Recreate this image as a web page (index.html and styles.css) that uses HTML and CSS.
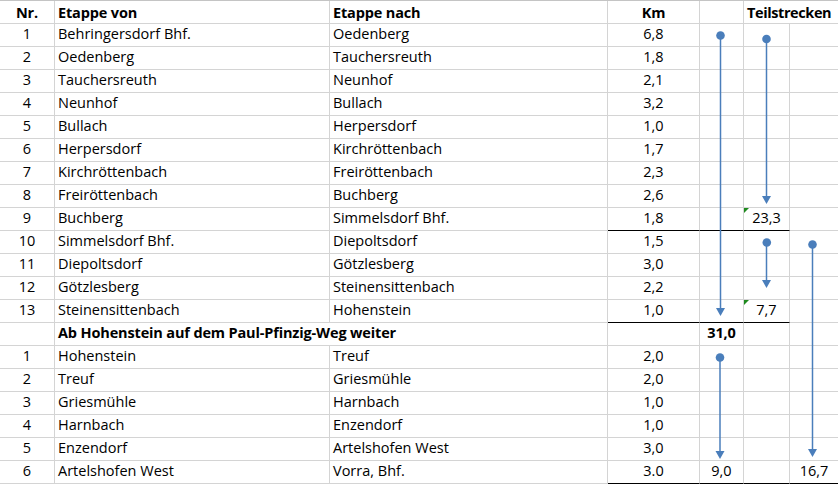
FILE: index.html
```html
<!DOCTYPE html>
<html lang="de">
<head>
<meta charset="utf-8">
<title>Etappen</title>
<link rel="stylesheet" href="styles.css">
</head>
<body>
<div class="sheet">
  <div class="grid">
    <div class="row head">
      <div class="c c1 b">Nr.</div><div class="c c2 b">Etappe von</div><div class="c c3 b">Etappe nach</div><div class="c c4 b">Km</div><div class="c c5"></div><div class="c c67 b left">Teilstrecken</div>
    </div>
    <div class="row"><div class="c c1">1</div><div class="c c2">Behringersdorf Bhf.</div><div class="c c3">Oedenberg</div><div class="c c4">6,8</div><div class="c c5"></div><div class="c c6"></div><div class="c c7"></div></div>
    <div class="row"><div class="c c1">2</div><div class="c c2">Oedenberg</div><div class="c c3">Tauchersreuth</div><div class="c c4">1,8</div><div class="c c5"></div><div class="c c6"></div><div class="c c7"></div></div>
    <div class="row"><div class="c c1">3</div><div class="c c2">Tauchersreuth</div><div class="c c3">Neunhof</div><div class="c c4">2,1</div><div class="c c5"></div><div class="c c6"></div><div class="c c7"></div></div>
    <div class="row"><div class="c c1">4</div><div class="c c2">Neunhof</div><div class="c c3">Bullach</div><div class="c c4">3,2</div><div class="c c5"></div><div class="c c6"></div><div class="c c7"></div></div>
    <div class="row"><div class="c c1">5</div><div class="c c2">Bullach</div><div class="c c3">Herpersdorf</div><div class="c c4">1,0</div><div class="c c5"></div><div class="c c6"></div><div class="c c7"></div></div>
    <div class="row"><div class="c c1">6</div><div class="c c2">Herpersdorf</div><div class="c c3">Kirchröttenbach</div><div class="c c4">1,7</div><div class="c c5"></div><div class="c c6"></div><div class="c c7"></div></div>
    <div class="row"><div class="c c1">7</div><div class="c c2">Kirchröttenbach</div><div class="c c3">Freiröttenbach</div><div class="c c4">2,3</div><div class="c c5"></div><div class="c c6"></div><div class="c c7"></div></div>
    <div class="row"><div class="c c1">8</div><div class="c c2">Freiröttenbach</div><div class="c c3">Buchberg</div><div class="c c4">2,6</div><div class="c c5"></div><div class="c c6"></div><div class="c c7"></div></div>
    <div class="row total"><div class="c c1">9</div><div class="c c2">Buchberg</div><div class="c c3">Simmelsdorf Bhf.</div><div class="c c4">1,8</div><div class="c c5"></div><div class="c c6 note">23,3</div><div class="c c7"></div></div>
    <div class="row"><div class="c c1">10</div><div class="c c2">Simmelsdorf Bhf.</div><div class="c c3">Diepoltsdorf</div><div class="c c4">1,5</div><div class="c c5"></div><div class="c c6"></div><div class="c c7"></div></div>
    <div class="row"><div class="c c1">11</div><div class="c c2">Diepoltsdorf</div><div class="c c3">Götzlesberg</div><div class="c c4">3,0</div><div class="c c5"></div><div class="c c6"></div><div class="c c7"></div></div>
    <div class="row"><div class="c c1">12</div><div class="c c2">Götzlesberg</div><div class="c c3">Steinensittenbach</div><div class="c c4">2,2</div><div class="c c5"></div><div class="c c6"></div><div class="c c7"></div></div>
    <div class="row total"><div class="c c1">13</div><div class="c c2">Steinensittenbach</div><div class="c c3">Hohenstein</div><div class="c c4">1,0</div><div class="c c5"></div><div class="c c6 note">7,7</div><div class="c c7"></div></div>
    <div class="row"><div class="c c1"></div><div class="c c23 b left">Ab Hohenstein auf dem Paul-Pfinzig-Weg weiter</div><div class="c c4"></div><div class="c c5 b">31,0</div><div class="c c6"></div><div class="c c7"></div></div>
    <div class="row"><div class="c c1">1</div><div class="c c2">Hohenstein</div><div class="c c3">Treuf</div><div class="c c4">2,0</div><div class="c c5"></div><div class="c c6"></div><div class="c c7"></div></div>
    <div class="row"><div class="c c1">2</div><div class="c c2">Treuf</div><div class="c c3">Griesmühle</div><div class="c c4">2,0</div><div class="c c5"></div><div class="c c6"></div><div class="c c7"></div></div>
    <div class="row"><div class="c c1">3</div><div class="c c2">Griesmühle</div><div class="c c3">Harnbach</div><div class="c c4">1,0</div><div class="c c5"></div><div class="c c6"></div><div class="c c7"></div></div>
    <div class="row"><div class="c c1">4</div><div class="c c2">Harnbach</div><div class="c c3">Enzendorf</div><div class="c c4">1,0</div><div class="c c5"></div><div class="c c6"></div><div class="c c7"></div></div>
    <div class="row"><div class="c c1">5</div><div class="c c2">Enzendorf</div><div class="c c3">Artelshofen West</div><div class="c c4">3,0</div><div class="c c5"></div><div class="c c6"></div><div class="c c7"></div></div>
    <div class="row last"><div class="c c1">6</div><div class="c c2">Artelshofen West</div><div class="c c3">Vorra, Bhf.</div><div class="c c4">3.0</div><div class="c c5">9,0</div><div class="c c6"></div><div class="c c7">16,7</div></div>
  </div>
  <svg class="arrows" width="838" height="484" viewBox="0 0 838 484" aria-hidden="true">
    <g stroke="#4a7ebb" stroke-width="1.5" fill="none">
      <line x1="720.5" y1="35.5" x2="720.5" y2="309"/>
      <line x1="766.5" y1="39" x2="766.5" y2="197"/>
      <line x1="766.5" y1="242.5" x2="766.5" y2="281"/>
      <line x1="812.5" y1="244.5" x2="812.5" y2="449"/>
      <line x1="720" y1="357.5" x2="720" y2="452"/>
    </g>
    <g fill="#4a7ebb">
      <circle cx="720.5" cy="35.5" r="4.3"/>
      <circle cx="766.5" cy="39" r="4.3"/>
      <circle cx="766.8" cy="242.5" r="4.3"/>
      <circle cx="812.5" cy="244.5" r="4.3"/>
      <circle cx="720" cy="357.5" r="4.3"/>
      <polygon points="716,308 725,308 720.5,316"/>
      <polygon points="762,196 771,196 766.5,204"/>
      <polygon points="762,280 771,280 766.5,288"/>
      <polygon points="808,449 817,449 812.5,457"/>
      <polygon points="715.5,451 724.5,451 720,459"/>
    </g>
  </svg>
</div>
</body>
</html>
```
FILE: styles.css
```css
html, body {
  margin: 0;
  padding: 0;
  background: #ffffff;
}

.sheet {
  position: relative;
  width: 838px;
  height: 484px;
  overflow: hidden;
  font-family: "Open Sans", "Liberation Sans", sans-serif;
  font-size: 14.5px;
  color: #000;
}

.grid {
  border-top: 1px solid #c4c4c4;
}

.row {
  display: grid;
  grid-template-columns: 55px 275px 278px 92px 44px 46px 48px;
  height: 23px;
}

.c {
  box-sizing: border-box;
  height: 23px;
  border-right: 1px solid #d4d4d4;
  border-bottom: 1px solid #d4d4d4;
  line-height: 20px;
  white-space: nowrap;
  text-align: center;
  position: relative;
}

.c2, .c3, .left {
  text-align: left;
  padding-left: 3px;
}

.c7 {
  border-right: none;
}

.c23 {
  grid-column: span 2;
  overflow: visible;
}

.c67 {
  grid-column: span 2;
  border-right: none;
}

.b {
  font-weight: 700;
  letter-spacing: -0.15px;
}

.c67.b {
  letter-spacing: -0.4px;
}

.head .c {
  padding-top: 2px;
}

.total .c4, .total .c5, .total .c6 {
  border-bottom-color: #000;
}

.last .c4, .last .c5, .last .c6, .last .c7 {
  border-bottom-color: #000;
}

.note::before {
  content: "";
  position: absolute;
  left: 0;
  top: 0;
  width: 0;
  height: 0;
  border-top: 5px solid #1e8a1e;
  border-right: 5px solid transparent;
}

.arrows {
  position: absolute;
  left: 0;
  top: 0;
  pointer-events: none;
}
```
